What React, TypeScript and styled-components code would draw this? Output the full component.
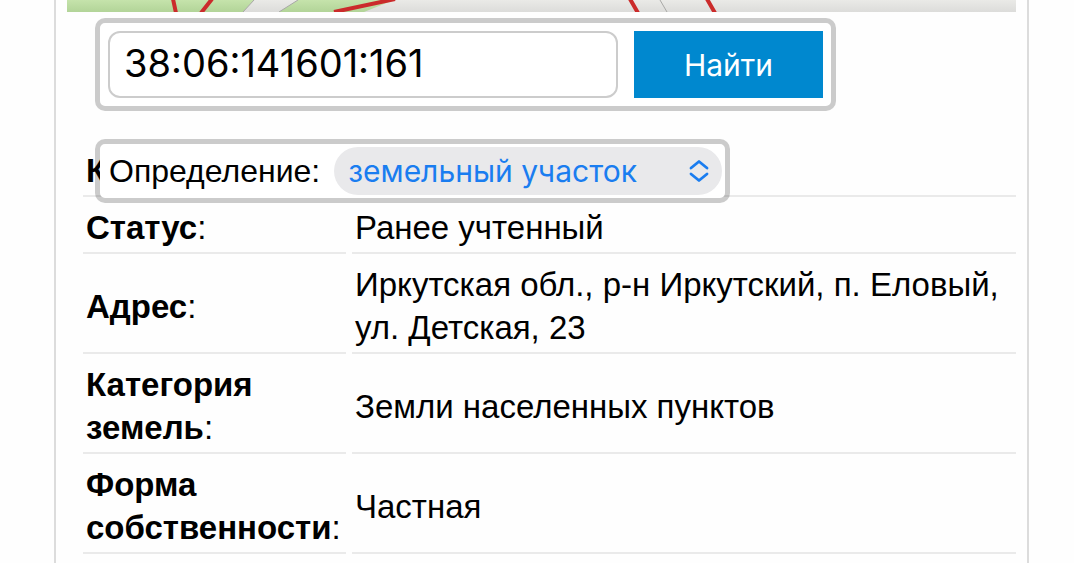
import React from "react";
import styled, { createGlobalStyle } from "styled-components";

const GlobalStyle = createGlobalStyle`
  *, *::before, *::after { box-sizing: border-box; }
  body {
    margin: 0;
    background: #fefefe;
    color: #000;
    font-family: "Liberation Sans", Arial, sans-serif;
    font-size: 32px;
    line-height: 43px;
  }
`;

const Page = styled.main`
  min-height: 100vh;
  margin: 0 45px 0 54px;
  padding: 0 11px;
  background: #fefefe;
  border: solid #dcdcdc;
  border-width: 0 2px;
`;

const MapStrip = styled.svg`
  display: block;
  width: 100%;
  height: 12px;
`;

const Panel = styled.div`
  border: 5px solid rgba(0, 0, 0, 0.2);
  border-radius: 10px;
  background: #fff;
  background-clip: padding-box;
`;

const SearchPanel = styled(Panel).attrs({ as: "form" })`
  display: flex;
  gap: 16px;
  max-width: 741px;
  margin: 6px 0 0 28px;
  padding: 8px;
`;

const SearchInput = styled.input`
  flex: 1;
  min-width: 0;
  height: 67px;
  padding: 0 14px 4px;
  border: 2px solid #ccc;
  border-radius: 12px;
  background: #fff;
  color: #000;
  font: 38px Inter, sans-serif;
  outline: none;
`;

const SearchButton = styled.button`
  width: 189px;
  height: 67px;
  padding: 0;
  border: 0;
  background: #0088cf;
  color: #fff;
  font: 30px Inter, sans-serif;
`;

const Details = styled.section`
  position: relative;
  margin: 29px -6px 0 10px;
`;

const KindPanel = styled(Panel)`
  position: absolute;
  top: -1px;
  left: 18px;
  display: flex;
  align-items: center;
  gap: 14px;
  width: 635px;
  height: 64px;
  padding: 0 3px 0 9px;
`;

const SelectWrap = styled.div`
  position: relative;
  flex: 1;
`;

const KindSelect = styled.select`
  display: block;
  width: 100%;
  height: 48px;
  padding: 0 40px 0 14px;
  appearance: none;
  border: 0;
  border-radius: 24px;
  background: #e9e9eb;
  color: #1a7df0;
  font: 30px Inter, sans-serif;
`;

const Arrows = styled.svg`
  position: absolute;
  top: 12px;
  right: 12px;
  pointer-events: none;
`;

const Table = styled.table`
  width: 100%;
  border-spacing: 6px;
  table-layout: fixed;
  font-size: 33px;
`;

const Name = styled.th`
  width: 263px;
  padding: 3px;
  border-bottom: 2px solid #eaeaea;
  font-weight: normal;
  text-align: left;
`;

const Value = styled.td`
  padding: 3px;
  border-bottom: 2px solid #eaeaea;
`;

const rows = [
  { name: "Статус", value: "Ранее учтенный" },
  { name: "Адрес", value: "Иркутская обл., р-н Иркутский, п. Еловый, ул. Детская, 23" },
  { name: "Категория земель", value: "Земли населенных пунктов" },
  { name: "Форма собственности", value: "Частная" },
];

export default function App() {
  return (
    <>
      <GlobalStyle />
      <Page>
        <MapStrip viewBox="0 0 949 12" preserveAspectRatio="none" aria-hidden="true">
          <defs>
            <linearGradient id="ground" x1="0" y1="0" x2="0" y2="1">
              <stop offset="0" stopColor="#eaeae7" />
              <stop offset="1" stopColor="#dcdcda" />
            </linearGradient>
            <linearGradient id="grass" x1="0" y1="0" x2="0" y2="1">
              <stop offset="0" stopColor="#c5e3ab" />
              <stop offset="1" stopColor="#b2d498" />
            </linearGradient>
          </defs>
          <rect width="949" height="12" fill="url(#ground)" />
          <path d="M0 0H187L176 12H0Z" fill="url(#grass)" />
          <path d="M231 0H327L297 12H212Z" fill="url(#grass)" />
          <path d="M187 0L176 12M231 0L212 12M593 0L600 12" stroke="#a8a8a6" fill="none" />
          <path d="M106 -1L109 13M145 -1L134 13M328 -1L267 12M563 -1L571 13M640 -1L648 13" stroke="#cb2b2b" strokeWidth="4" fill="none" />
        </MapStrip>
        <SearchPanel>
          <SearchInput aria-label="Кадастровый номер" defaultValue="38:06:141601:161" />
          <SearchButton type="button">Найти</SearchButton>
        </SearchPanel>
        <Details>
          <Table>
            <tbody>
              <tr>
                <Name scope="row"><b>К</b></Name>
                <Value>&nbsp;</Value>
              </tr>
              {rows.map((row) => (
                <tr key={row.name}>
                  <Name scope="row"><b>{row.name}</b>:</Name>
                  <Value>{row.value}</Value>
                </tr>
              ))}
            </tbody>
          </Table>
          <KindPanel>
            <label htmlFor="kind">Определение:</label>
            <SelectWrap>
              <KindSelect id="kind">
                <option>земельный участок</option>
              </KindSelect>
              <Arrows width="22" height="24" viewBox="0 0 22 24" fill="none" stroke="#1a7df0" strokeWidth="2.8" strokeLinecap="round" strokeLinejoin="round" aria-hidden="true">
                <path d="M3 9L11 2.5L19 9M3 15L11 21.5L19 15" />
              </Arrows>
            </SelectWrap>
          </KindPanel>
        </Details>
      </Page>
    </>
  );
}
